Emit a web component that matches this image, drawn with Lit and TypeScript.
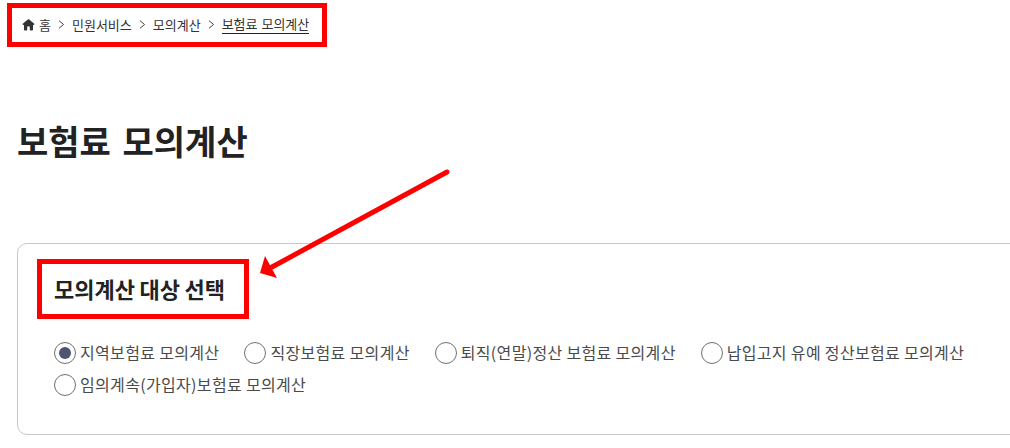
import { LitElement, html, css } from "lit";
import { customElement } from "lit/decorators.js";

const options = [
  "지역보험료 모의계산",
  "직장보험료 모의계산",
  "퇴직(연말)정산 보험료 모의계산",
  "납입고지 유예 정산보험료 모의계산",
  "임의계속(가입자)보험료 모의계산",
];

@customElement("app-root")
export class AppRoot extends LitElement {
  static styles = css`
    :host {
      display: block;
      position: relative;
      width: 1010px;
      height: 448px;
      overflow: hidden;
      background: #fff;
      color: #222;
      font-family: "Noto Sans CJK KR", "Noto Sans", sans-serif;
    }
    .crumbs {
      display: flex;
      align-items: center;
      height: 44px;
      padding: 0 0 0 22px;
      box-sizing: border-box;
      margin-top: 2px;
      font-size: 13px;
      color: #333;
    }
    .crumbs svg.home { width: 13px; height: 13px; margin-right: 4px; }
    .sep { width: 21px; display: flex; justify-content: center; }
    .sep svg { width: 7px; height: 9px; }
    .current { border-bottom: 1px solid #222; color: #333; line-height: 18px; word-spacing: 1px; }
    h1 {
      margin: 70px 0 0 17px;
      font-size: 34px;
      line-height: 50px;
      font-weight: 700;
      color: #222;
      word-spacing: 4px;
    }
    .card {
      box-sizing: border-box;
      width: 1100px;
      height: 192px;
      margin: 77px 0 0 17px;
      border: 1px solid #c8c8c8;
      border-radius: 10px;
      padding: 29px 0 0 36px;
    }
    h2 {
      margin: 0;
      font-size: 22px;
      line-height: 30px;
      font-weight: 700;
      color: #222;
      word-spacing: -0.5px;
    }
    .options {
      display: flex;
      flex-wrap: wrap;
      width: 940px;
      margin-top: 39px;
      row-gap: 10px;
      column-gap: 25px;
    }
    label {
      display: flex;
      align-items: center;
      gap: 4px;
      height: 22px;
      font-size: 16px;
      letter-spacing: 0.33px;
      color: #4a4a4a;
    }
    .text { padding-bottom: 2px; }
    .radio {
      box-sizing: border-box;
      width: 22px;
      height: 22px;
      border: 1px solid #707070;
      border-radius: 50%;
      display: flex;
      align-items: center;
      justify-content: center;
    }
    .radio.on::after {
      content: "";
      width: 12px;
      height: 12px;
      border-radius: 50%;
      background: #4f5470;
    }
    .mark {
      position: absolute;
      box-sizing: border-box;
      border: 5px solid #ff0000;
      pointer-events: none;
    }
    .m1 { left: 7px; top: 3px; width: 320px; height: 44px; }
    .m2 { left: 37px; top: 259px; width: 212px; height: 60px; }
    .arrow {
      position: absolute;
      left: 0;
      top: 0;
      width: 1010px;
      height: 448px;
      pointer-events: none;
    }
  `;

  private sep() {
    return html`<span class="sep"
      ><svg viewBox="0 0 7 9"><path d="M1 .7 5.6 4.5 1 8.3" fill="none" stroke="#444" stroke-width="1"/></svg></span
    >`;
  }

  render() {
    return html`
      <nav class="crumbs">
        <svg class="home" viewBox="0 0 13 13">
          <path d="M6.5 1.2C6.2 1.2 6 1.3 5.8 1.5L1 5.6C.4 6.1.7 7 1.5 7H2V11.4C2 12 2.4 12.4 3 12.4H4.6C5 12.4 5.2 12.1 5.2 11.8V9.4C5.2 8.7 5.8 8.2 6.5 8.2S7.8 8.7 7.8 9.4V11.8C7.8 12.1 8 12.4 8.4 12.4H10C10.6 12.4 11 12 11 11.4V7H11.5C12.3 7 12.6 6.1 12 5.6L7.2 1.5C7 1.3 6.8 1.2 6.5 1.2Z" fill="#333" />
        </svg>
        <span>홈</span>${this.sep()}<span>민원서비스</span>${this.sep()}<span>모의계산</span>${this.sep()}<span class="current">보험료 모의계산</span>
      </nav>
      <h1>보험료 모의계산</h1>
      <section class="card">
        <h2>모의계산 대상 선택</h2>
        <div class="options">
          ${options.map(
            (o, i) => html`<label><span class="radio ${i === 0 ? "on" : ""}"></span><span class="text">${o}</span></label>`
          )}
        </div>
      </section>
      <div class="mark m1"></div>
      <div class="mark m2"></div>
      <svg class="arrow" viewBox="0 0 1010 448">
        <path d="M447 172 272 267" stroke="#ff0000" stroke-width="5" stroke-linecap="round" fill="none" />
        <path d="M260 273 265 256 277 278Z" fill="#ff0000" />
      </svg>
    `;
  }
}
